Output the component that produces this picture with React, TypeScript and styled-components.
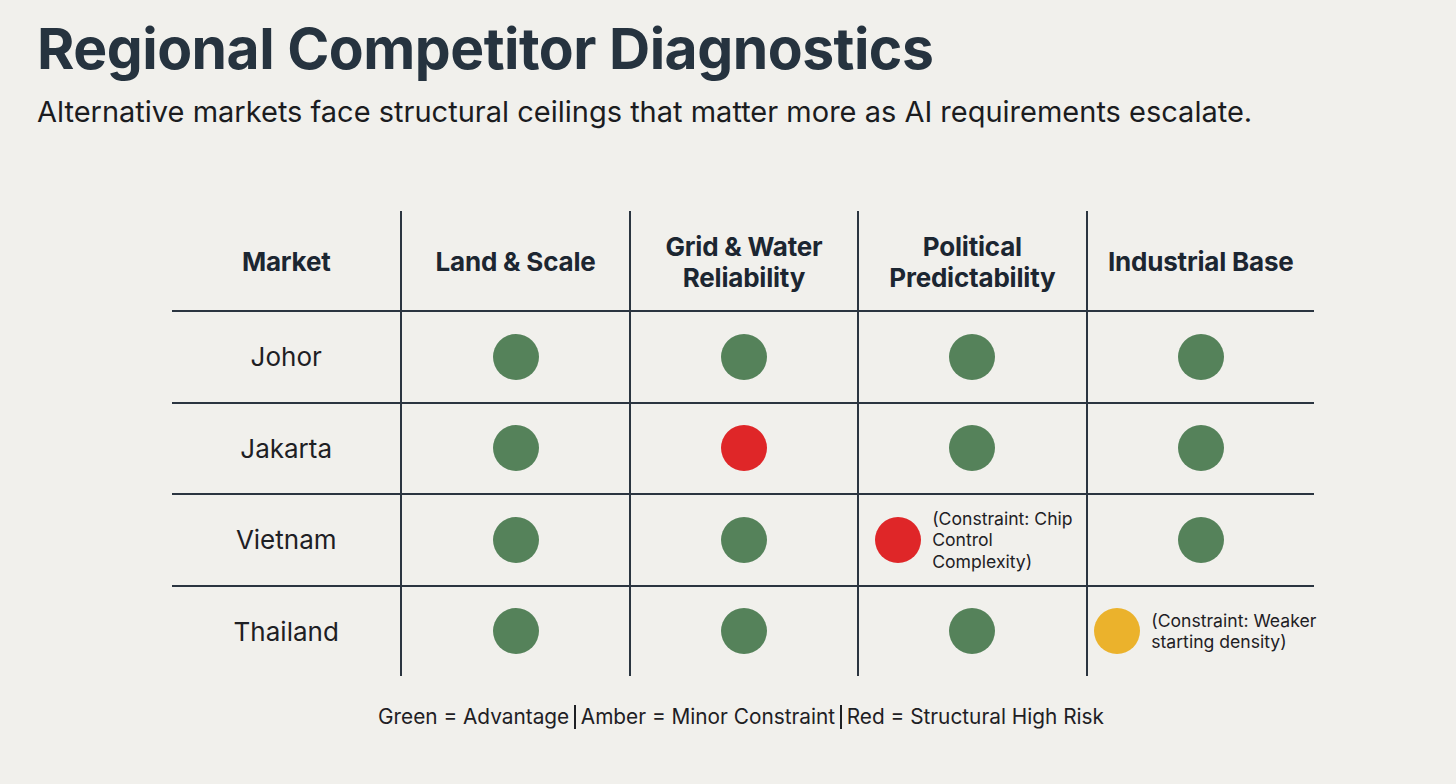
import * as React from 'react';
import styled, { createGlobalStyle } from 'styled-components';

type Level = 'green' | 'amber' | 'red';

const colors: Record<Level, string> = {
  green: '#55825a',
  amber: '#ebb22c',
  red: '#df2628',
};

const GlobalStyle = createGlobalStyle`
  html, body {
    margin: 0;
    padding: 0;
    background: #f1f0ec;
  }
  body {
    font-family: Inter, "Noto Sans", "Liberation Sans", sans-serif;
    color: #1f2328;
  }
`;

const Page = styled('main')`
  width: 1456px;
  height: 784px;
  box-sizing: border-box;
  padding: 15px 37px 0;
  overflow: hidden;
`;

const Title = styled('h1')`
  margin: 0;
  font-size: 57px;
  font-weight: 700;
  letter-spacing: -0.5px;
  line-height: 68px;
  color: #26333f;
`;

const Subtitle = styled('p')`
  margin: 12px 0 0;
  font-size: 29px;
  line-height: 34px;
  color: #1b1c1f;
`;

const Table = styled('div')`
  display: grid;
  grid-template-columns: repeat(5, 228.4px);
  grid-template-rows: 99px repeat(4, 91.5px);
  width: 1142px;
  margin: 82px 0 0 135px;
`;

const Cell = styled('div')<{ $col: number; $row: number }>`
  display: flex;
  align-items: center;
  justify-content: center;
  box-sizing: border-box;
  min-width: 0;
  border-left: ${({ $col }) => ($col > 0 ? '2px solid #2b3540' : 'none')};
  border-top: ${({ $row }) => ($row > 0 ? '2px solid #2b3540' : 'none')};
`;

const HeadText = styled('span')`
  font-size: 26px;
  font-weight: 700;
  letter-spacing: -0.2px;
  line-height: 31px;
  text-align: center;
  color: #1c2631;
  padding-top: 2px;
`;

const MarketName = styled('span')`
  font-size: 26px;
  color: #1e2024;
`;

const Dot = styled('span')<{ $level: Level }>`
  flex: none;
  width: 46px;
  height: 46px;
  border-radius: 50%;
  background: ${({ $level }) => colors[$level]};
`;

const Noted = styled('div')<{ $inset: number }>`
  display: flex;
  align-items: center;
  gap: 11px;
  width: 100%;
  padding-left: ${({ $inset }) => $inset}px;
  white-space: nowrap;
`;

const Note = styled('span')`
  font-size: 17.6px;
  line-height: 21.5px;
  color: #1e2024;
`;

const Legend = styled('p')`
  margin: 28px 0 0 341px;
  display: flex;
  align-items: center;
  gap: 5px;
  font-size: 20.8px;
  color: #1e2024;
`;

const Bar = styled('span')`
  width: 1.6px;
  height: 24px;
  background: #1e2024;
`;

const headers = [
  'Market',
  'Land & Scale',
  'Grid & Water\nReliability',
  'Political\nPredictability',
  'Industrial Base',
];

type Entry = Level | { level: Level; note: string; inset: number };

const rows: { market: string; cells: Entry[] }[] = [
  { market: 'Johor', cells: ['green', 'green', 'green', 'green'] },
  { market: 'Jakarta', cells: ['green', 'red', 'green', 'green'] },
  {
    market: 'Vietnam',
    cells: ['green', 'green', { level: 'red', note: '(Constraint: Chip\nControl\nComplexity)', inset: 16 }, 'green'],
  },
  {
    market: 'Thailand',
    cells: ['green', 'green', 'green', { level: 'amber', note: '(Constraint: Weaker\nstarting density)', inset: 9 }],
  },
];

const lines = (text: string) =>
  text.split('\n').map((t, i) => (
    <React.Fragment key={i}>
      {i > 0 && <br />}
      {t}
    </React.Fragment>
  ));

export default function App() {
  return (
    <Page>
      <GlobalStyle />
      <Title>Regional Competitor Diagnostics</Title>
      <Subtitle>Alternative markets face structural ceilings that matter more as AI requirements escalate.</Subtitle>
      <Table>
        {headers.map((h, c) => (
          <Cell key={h} $col={c} $row={0}>
            <HeadText>{lines(h)}</HeadText>
          </Cell>
        ))}
        {rows.map((r, ri) => (
          <React.Fragment key={r.market}>
            <Cell $col={0} $row={ri + 1}>
              <MarketName>{r.market}</MarketName>
            </Cell>
            {r.cells.map((e, ci) => (
              <Cell key={ci} $col={ci + 1} $row={ri + 1}>
                {typeof e === 'string' ? (
                  <Dot $level={e} />
                ) : (
                  <Noted $inset={e.inset}>
                    <Dot $level={e.level} />
                    <Note>{lines(e.note)}</Note>
                  </Noted>
                )}
              </Cell>
            ))}
          </React.Fragment>
        ))}
      </Table>
      <Legend>
        Green = Advantage <Bar /> Amber = Minor Constraint <Bar /> Red = Structural High Risk
      </Legend>
    </Page>
  );
}
